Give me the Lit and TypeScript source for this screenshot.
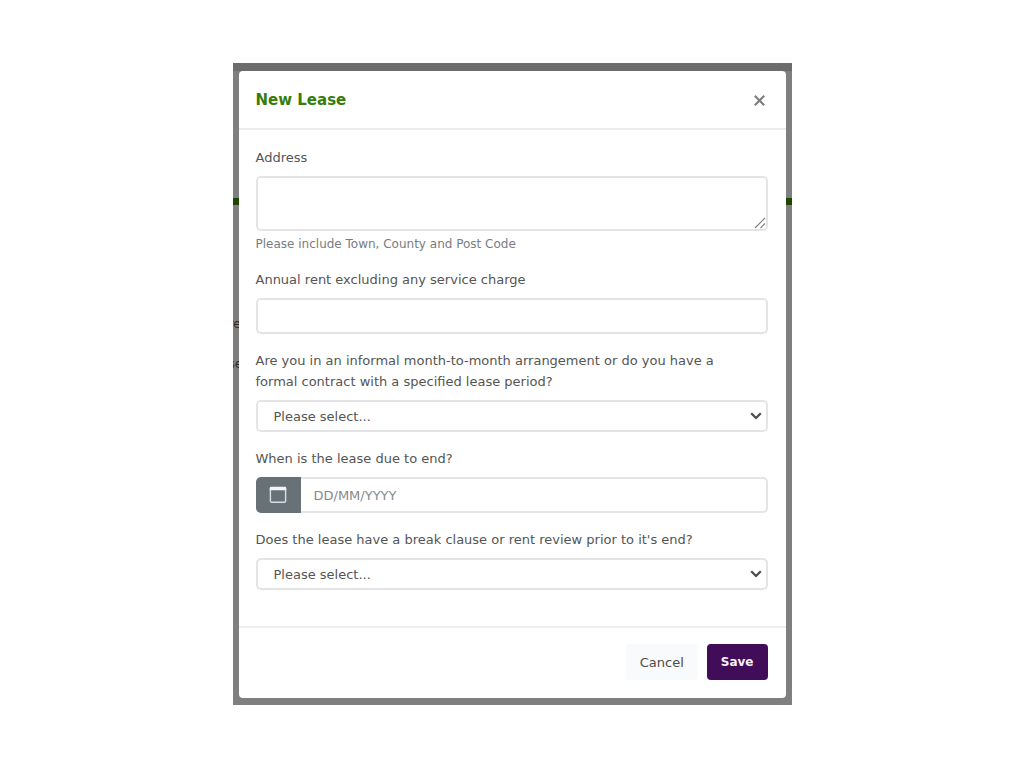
import { LitElement, html, css } from "lit";
import { customElement, property } from "lit/decorators.js";

const control = css`
  .label {
    display: block;
    margin-bottom: 8px;
    padding-right: 24px;
  }
  .control {
    display: block;
    box-sizing: border-box;
    width: 100%;
    margin: 0;
    border: 2px solid #e4e4e6;
    border-radius: 5px;
    background: #fff;
    color: #555;
    font: inherit;
    outline-color: #8fb878;
  }
`;

@customElement("lease-select")
class LeaseSelect extends LitElement {
  @property() label = "";

  static styles = [
    control,
    css`
      :host {
        display: block;
      }
      .box {
        display: grid;
        align-items: center;
      }
      .control,
      .arrow {
        grid-area: 1 / 1;
      }
      .control {
        height: 32px;
        padding: 0 32px 0 16px;
        appearance: none;
      }
      .arrow {
        justify-self: end;
        margin-right: 6px;
        pointer-events: none;
      }
    `,
  ];

  render() {
    return html`
      <label class="label" for="choice">${this.label}</label>
      <div class="box">
        <select class="control" id="choice">
          <option>Please select...</option>
        </select>
        <svg class="arrow" width="12" height="8" viewBox="0 0 12 8" aria-hidden="true">
          <path d="M1.2 1.3 6 6 10.8 1.3" fill="none" stroke="#4c4c4c" stroke-width="2.3" />
        </svg>
      </div>
    `;
  }
}

@customElement("app-root")
class AppRoot extends LitElement {
  static styles = [
    control,
    css`
      :host {
        display: flex;
        align-items: center;
        justify-content: center;
        min-height: 100vh;
        background: #fff;
        font: 13px/21px Verdana, "DejaVu Sans", sans-serif;
        color: #555;
      }
      .backdrop {
        position: relative;
        box-sizing: border-box;
        width: 100%;
        max-width: 559px;
        padding: 8px 6px 7px;
        overflow: hidden;
        background: linear-gradient(#6c6c6c 8px, #7f7f7f 8px);
      }
      .stripe {
        position: absolute;
        top: 135px;
        left: 0;
        right: 0;
        height: 7px;
        background: #1f4505;
      }
      .behind {
        position: absolute;
        left: -4px;
        color: #2c2c2c;
        font-size: 12px;
      }
      .first {
        top: 251px;
      }
      .second {
        top: 291px;
      }
      .dialog {
        position: relative;
        border-radius: 4px;
        background: #fff;
      }
      .header {
        display: flex;
        align-items: center;
        justify-content: space-between;
        padding: 19px 18px 17px 17px;
        border-bottom: 2px solid #ececec;
      }
      .title {
        margin: 0;
        font-size: 15px;
        line-height: 21px;
        font-weight: 700;
        color: #377d0a;
      }
      .close {
        display: flex;
        padding: 3px;
        border: 0;
        background: none;
      }
      .body {
        display: flex;
        flex-direction: column;
        gap: 16px;
        padding: 17px 18px 36px 17px;
      }
      .area {
        height: 55px;
        resize: vertical;
      }
      .area::-webkit-resizer {
        background: no-repeat right bottom / 12px 12px
          url("data:image/svg+xml,%3Csvg xmlns='http://www.w3.org/2000/svg' viewBox='0 0 12 12'%3E%3Cpath d='M1 11 11 1M6.500 11 11 6.500' stroke='%23808080' stroke-width='1.200'/%3E%3C/svg%3E");
      }
      .help {
        margin: 4px 0 0;
        font-size: 12px;
        line-height: 18px;
        color: #777d81;
      }
      .line {
        height: 36px;
        padding: 0 13px;
      }
      .group {
        display: flex;
      }
      .group .line {
        border-left: 0;
        border-radius: 0 5px 5px 0;
      }
      .line::placeholder {
        color: #858a8e;
        opacity: 1;
      }
      .pick {
        display: flex;
        flex: none;
        align-items: center;
        justify-content: center;
        width: 45px;
        padding: 0;
        border: 0;
        border-radius: 5px 0 0 5px;
        background: #687176;
      }
      .footer {
        display: flex;
        justify-content: flex-end;
        gap: 9px;
        padding: 16px 18px 18px 17px;
        border-top: 2px solid #f0f0f0;
      }
      .button {
        height: 36px;
        padding: 0 14px;
        border: 0;
        border-radius: 4px;
        font: inherit;
      }
      .cancel {
        background: #f8fafb;
        color: #4c4c4c;
      }
      .save {
        background: #420d58;
        color: #f6effa;
        font-size: 12px;
        font-weight: 700;
      }
    `,
  ];

  render() {
    return html`
      <main class="backdrop">
        <div class="stripe"></div>
        <span class="behind first" aria-hidden="true">re</span>
        <span class="behind second" aria-hidden="true">se</span>
        <form class="dialog" role="dialog" aria-labelledby="title" @submit=${(e: Event) => e.preventDefault()}>
          <header class="header">
            <h1 class="title" id="title">New Lease</h1>
            <button class="close" type="button" aria-label="Close">
              <svg width="11" height="11" viewBox="0 0 11 11" aria-hidden="true">
                <path d="M.8.8 10.2 10.2M10.2.8.8 10.2" stroke="#7d7d7d" stroke-width="2.1" />
              </svg>
            </button>
          </header>
          <div class="body">
            <div>
              <label class="label" for="address">Address</label>
              <textarea class="control area" id="address" aria-describedby="hint"></textarea>
              <p class="help" id="hint">Please include Town, County and Post Code</p>
            </div>
            <div>
              <label class="label" for="rent">Annual rent excluding any service charge</label>
              <input class="control line" id="rent" type="text" />
            </div>
            <lease-select
              label="Are you in an informal month-to-month arrangement or do you have a formal contract with a specified lease period?"
            ></lease-select>
            <div>
              <label class="label" for="end">When is the lease due to end?</label>
              <div class="group">
                <button class="pick" type="button" aria-label="Choose date">
                  <svg width="18" height="18" viewBox="0 0 18 18" aria-hidden="true">
                    <rect x="1.400" y="1.600" width="15.200" height="14.600" rx="1.200" fill="none" stroke="#d5e0ea" stroke-width="1.400" />
                    <path d="M.8 4.200V1.900Q.8.700 2 .7H16Q17.200.700 17.200 1.900V4.200Z" fill="#f1f5f8" />
                  </svg>
                </button>
                <input class="control line" id="end" type="text" placeholder="DD/MM/YYYY" />
              </div>
            </div>
            <lease-select label="Does the lease have a break clause or rent review prior to it's end?"></lease-select>
          </div>
          <footer class="footer">
            <button class="button cancel" type="button">Cancel</button>
            <button class="button save" type="submit">Save</button>
          </footer>
        </form>
      </main>
    `;
  }
}
